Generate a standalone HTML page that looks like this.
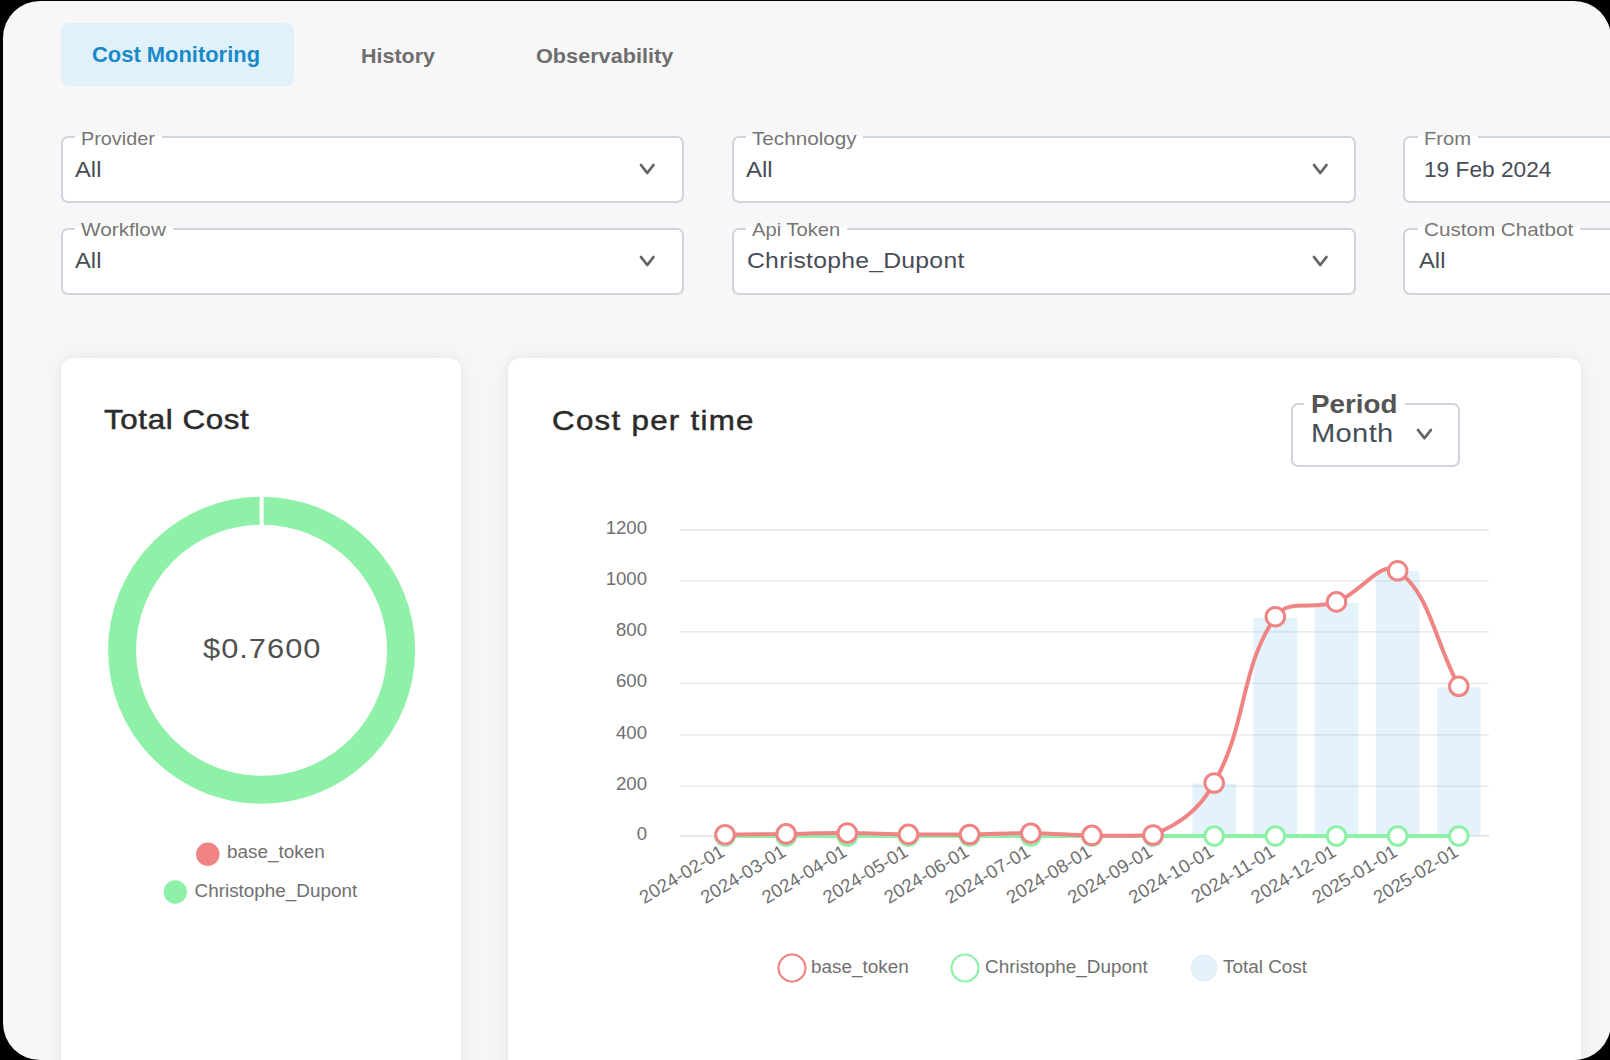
<!DOCTYPE html>
<html><head><meta charset="utf-8"><title>Cost Monitoring</title>
<style>
html,body{margin:0;padding:0;}
body{width:1610px;height:1060px;overflow:hidden;background:#000;position:relative;font-family:"Liberation Sans",sans-serif;}
.page{position:absolute;left:3px;top:1px;width:1608px;height:1059px;border-radius:37px;background:#f7f7f7;overflow:hidden;}
.abs{position:absolute;left:0;top:0;width:1610px;height:1060px;}
.inner{position:absolute;left:-3px;top:-1px;width:1610px;height:1060px;}
.t{position:absolute;line-height:1;white-space:nowrap;transform-origin:0 0;}
.tab{position:absolute;left:61px;top:23.4px;width:232.5px;height:62.6px;border-radius:8px;background:#e1f1fa;}
.fb{position:absolute;height:67.4px;box-sizing:border-box;border:2px solid #ced5dc;border-radius:7px;background:#fff;}
.notch{position:absolute;height:3px;background:#fff;}
.chev{position:absolute;}
.card{position:absolute;background:#fff;border-radius:12px;box-shadow:0 0 6px rgba(0,0,0,0.05),0 0 26px rgba(0,0,0,0.06);}
svg text{font-family:"Liberation Sans",sans-serif;}
.tk{font-size:18.6px;fill:#707070;}
.lg{font-size:18.9px;fill:#707070;}
</style></head>
<body>
<div class="page"><div class="inner">
<div class="tab"></div>
<div class="t" style="left:92.30px;top:43.68px;font-size:22px;font-weight:bold;color:#1889c9;letter-spacing:0.000px;transform:scaleX(0.9964);">Cost Monitoring</div>
<div class="t" style="left:361.30px;top:44.82px;font-size:21px;font-weight:bold;color:#6e6e6e;letter-spacing:0.000px;transform:scaleX(1.0221);">History</div>
<div class="t" style="left:536.00px;top:44.82px;font-size:21px;font-weight:bold;color:#6e6e6e;letter-spacing:0.000px;transform:scaleX(1.0316);">Observability</div>
<div class="fb" style="left:60.8px;top:135.8px;width:623.5px"></div>
<div class="notch" style="left:74.9px;top:135.6px;width:86.7px"></div>
<div class="t" style="left:81.10px;top:128.62px;font-size:19px;font-weight:normal;color:#767676;letter-spacing:0.000px;transform:scaleX(1.0438);">Provider</div>
<div class="t" style="left:74.70px;top:158.65px;font-size:22.5px;font-weight:normal;color:#474d56;letter-spacing:-0.000px;transform:scaleX(1.0560);">All</div>
<svg class="chev" style="left:638.15px;top:162.30px" width="18.50" height="14.00" viewBox="0 0 18.50 14.00"><path d="M3 3 L9.25 11.00 L15.50 3" fill="none" stroke="#646464" stroke-width="2.8" stroke-linecap="round" stroke-linejoin="round"/></svg>
<div class="fb" style="left:732px;top:135.8px;width:623.5px"></div>
<div class="notch" style="left:745.6px;top:135.6px;width:117.4px"></div>
<div class="t" style="left:751.80px;top:128.62px;font-size:19px;font-weight:normal;color:#767676;letter-spacing:0.000px;transform:scaleX(1.0884);">Technology</div>
<div class="t" style="left:746.20px;top:158.65px;font-size:22.5px;font-weight:normal;color:#474d56;letter-spacing:0.000px;transform:scaleX(1.0640);">All</div>
<svg class="chev" style="left:1310.95px;top:162.30px" width="18.50" height="14.00" viewBox="0 0 18.50 14.00"><path d="M3 3 L9.25 11.00 L15.50 3" fill="none" stroke="#646464" stroke-width="2.8" stroke-linecap="round" stroke-linejoin="round"/></svg>
<div class="fb" style="left:1402.8px;top:135.8px;width:300px"></div>
<div class="notch" style="left:1418.2px;top:135.6px;width:59.8px"></div>
<div class="t" style="left:1424.40px;top:128.62px;font-size:19px;font-weight:normal;color:#767676;letter-spacing:0.000px;transform:scaleX(1.0609);">From</div>
<div class="t" style="left:1424.30px;top:158.65px;font-size:22.5px;font-weight:normal;color:#474d56;letter-spacing:0.000px;transform:scaleX(1.0087);">19 Feb 2024</div>
<div class="fb" style="left:60.8px;top:227.6px;width:623.5px"></div>
<div class="notch" style="left:75.2px;top:227.4px;width:97.8px"></div>
<div class="t" style="left:81.40px;top:220.42px;font-size:19px;font-weight:normal;color:#767676;letter-spacing:0.000px;transform:scaleX(1.0911);">Workflow</div>
<div class="t" style="left:74.70px;top:250.45px;font-size:22.5px;font-weight:normal;color:#474d56;letter-spacing:-0.000px;transform:scaleX(1.0560);">All</div>
<svg class="chev" style="left:638.15px;top:254.10px" width="18.50" height="14.00" viewBox="0 0 18.50 14.00"><path d="M3 3 L9.25 11.00 L15.50 3" fill="none" stroke="#646464" stroke-width="2.8" stroke-linecap="round" stroke-linejoin="round"/></svg>
<div class="fb" style="left:732px;top:227.6px;width:623.5px"></div>
<div class="notch" style="left:746.2px;top:227.4px;width:101.0px"></div>
<div class="t" style="left:752.40px;top:220.42px;font-size:19px;font-weight:normal;color:#767676;letter-spacing:-0.000px;transform:scaleX(1.0614);">Api Token</div>
<div class="t" style="left:746.80px;top:250.45px;font-size:22.5px;font-weight:normal;color:#474d56;letter-spacing:0.228px;transform:scaleX(1.1000);">Christophe_Dupont</div>
<svg class="chev" style="left:1310.95px;top:254.10px" width="18.50" height="14.00" viewBox="0 0 18.50 14.00"><path d="M3 3 L9.25 11.00 L15.50 3" fill="none" stroke="#646464" stroke-width="2.8" stroke-linecap="round" stroke-linejoin="round"/></svg>
<div class="fb" style="left:1402.8px;top:227.6px;width:300px"></div>
<div class="notch" style="left:1417.7px;top:227.4px;width:162.0px"></div>
<div class="t" style="left:1423.90px;top:220.42px;font-size:19px;font-weight:normal;color:#767676;letter-spacing:0.000px;transform:scaleX(1.0867);">Custom Chatbot</div>
<div class="t" style="left:1419.30px;top:250.45px;font-size:22.5px;font-weight:normal;color:#474d56;letter-spacing:-0.000px;transform:scaleX(1.0560);">All</div>
<div class="card" style="left:60.5px;top:357.5px;width:400px;height:760px"></div>
<div class="card" style="left:508px;top:357.5px;width:1073.3px;height:760px"></div>
<div class="t" style="left:104.20px;top:405.47px;font-size:28.5px;font-weight:normal;color:#2b2b2b;letter-spacing:0.548px;transform:scaleX(1.1000);-webkit-text-stroke:0.5px #2b2b2b;">Total Cost</div>
<div class="t" style="left:552.20px;top:405.87px;font-size:28.5px;font-weight:normal;color:#2b2b2b;letter-spacing:1.140px;transform:scaleX(1.1000);-webkit-text-stroke:0.5px #2b2b2b;">Cost per time</div>
<div class="t" style="left:202.70px;top:634.50px;font-size:28px;font-weight:normal;color:#505050;letter-spacing:0.921px;transform:scaleX(1.1000);">$0.7600</div>
<div class="fb" style="left:1291.3px;top:402.7px;width:168.9px;height:64px"></div>
<div class="notch" style="left:1304.4px;top:402px;width:101px;"></div>
<div class="t" style="left:1310.50px;top:390.89px;font-size:26px;font-weight:bold;color:#555;letter-spacing:-0.000px;transform:scaleX(1.0692);">Period</div>
<div class="t" style="left:1310.50px;top:420.47px;font-size:26.5px;font-weight:normal;color:#474d56;letter-spacing:0.280px;transform:scaleX(1.1000);">Month</div>
<svg class="chev" style="left:1414.75px;top:426.90px" width="18.90" height="14.20" viewBox="0 0 18.90 14.20"><path d="M3 3 L9.45 11.20 L15.90 3" fill="none" stroke="#646464" stroke-width="2.8" stroke-linecap="round" stroke-linejoin="round"/></svg>
<svg class="abs" width="1610" height="1060" viewBox="0 0 1610 1060">
<line x1="680" y1="786.20" x2="1489" y2="786.20" stroke="#e6e6e6" stroke-width="1.3"/>
<line x1="680" y1="734.80" x2="1489" y2="734.80" stroke="#e6e6e6" stroke-width="1.3"/>
<line x1="680" y1="683.30" x2="1489" y2="683.30" stroke="#e6e6e6" stroke-width="1.3"/>
<line x1="680" y1="631.80" x2="1489" y2="631.80" stroke="#e6e6e6" stroke-width="1.3"/>
<line x1="680" y1="580.80" x2="1489" y2="580.80" stroke="#e6e6e6" stroke-width="1.3"/>
<line x1="680" y1="530.00" x2="1489" y2="530.00" stroke="#e6e6e6" stroke-width="1.3"/>
<rect x="1192.35" y="783.50" width="43.7" height="52.30" fill="rgba(120,195,235,0.2)"/>
<rect x="1253.50" y="617.70" width="43.7" height="218.10" fill="rgba(120,195,235,0.2)"/>
<rect x="1314.65" y="603.00" width="43.7" height="232.80" fill="rgba(120,195,235,0.2)"/>
<rect x="1375.80" y="571.20" width="43.7" height="264.60" fill="rgba(120,195,235,0.2)"/>
<rect x="1436.95" y="687.30" width="43.7" height="148.50" fill="rgba(120,195,235,0.2)"/>
<line x1="680" y1="835.80" x2="1489" y2="835.80" stroke="#d6d9dc" stroke-width="1.3"/>
<text x="647" y="839.70" text-anchor="end" class="tk">0</text>
<text x="647" y="790.10" text-anchor="end" class="tk">200</text>
<text x="647" y="738.70" text-anchor="end" class="tk">400</text>
<text x="647" y="687.20" text-anchor="end" class="tk">600</text>
<text x="647" y="635.70" text-anchor="end" class="tk">800</text>
<text x="647" y="584.70" text-anchor="end" class="tk">1000</text>
<text x="647" y="533.90" text-anchor="end" class="tk">1200</text>
<path d="M725.00 836.0 L1458.80 836.0" stroke="#8ff0a8" stroke-width="4" fill="none"/>
<circle cx="725.00" cy="836.0" r="9.3" fill="#fff" stroke="#8ff0a8" stroke-width="3"/>
<circle cx="786.15" cy="836.0" r="9.3" fill="#fff" stroke="#8ff0a8" stroke-width="3"/>
<circle cx="847.30" cy="836.0" r="9.3" fill="#fff" stroke="#8ff0a8" stroke-width="3"/>
<circle cx="908.45" cy="836.0" r="9.3" fill="#fff" stroke="#8ff0a8" stroke-width="3"/>
<circle cx="969.60" cy="836.0" r="9.3" fill="#fff" stroke="#8ff0a8" stroke-width="3"/>
<circle cx="1030.75" cy="836.0" r="9.3" fill="#fff" stroke="#8ff0a8" stroke-width="3"/>
<circle cx="1091.90" cy="836.0" r="9.3" fill="#fff" stroke="#8ff0a8" stroke-width="3"/>
<circle cx="1153.05" cy="836.0" r="9.3" fill="#fff" stroke="#8ff0a8" stroke-width="3"/>
<circle cx="1214.20" cy="836.0" r="9.3" fill="#fff" stroke="#8ff0a8" stroke-width="3"/>
<circle cx="1275.35" cy="836.0" r="9.3" fill="#fff" stroke="#8ff0a8" stroke-width="3"/>
<circle cx="1336.50" cy="836.0" r="9.3" fill="#fff" stroke="#8ff0a8" stroke-width="3"/>
<circle cx="1397.65" cy="836.0" r="9.3" fill="#fff" stroke="#8ff0a8" stroke-width="3"/>
<circle cx="1458.80" cy="836.0" r="9.3" fill="#fff" stroke="#8ff0a8" stroke-width="3"/>
<path d="M725.00 834.70 C749.46 834.38 761.69 834.22 786.15 833.90 C810.61 833.58 822.84 833.00 847.30 833.10 C871.76 833.20 883.99 834.12 908.45 834.40 C932.91 834.68 945.14 834.74 969.60 834.50 C994.06 834.26 1006.30 833.02 1030.75 833.20 C1055.22 833.38 1067.43 835.04 1091.90 835.40 C1116.35 835.76 1131.90 836.50 1153.05 835.00 C1180.82 823.10 1198.95 810.22 1214.20 783.00 C1247.87 722.90 1239.25 670.16 1275.35 616.70 C1288.17 597.72 1313.10 610.68 1336.50 601.90 C1362.02 592.32 1380.81 559.18 1397.65 570.80 C1429.73 592.94 1434.34 640.10 1458.80 686.30" stroke="#f08484" stroke-width="4" fill="none"/>
<circle cx="725.00" cy="834.70" r="9.3" fill="#fff" stroke="#f08484" stroke-width="3"/>
<circle cx="786.15" cy="833.90" r="9.3" fill="#fff" stroke="#f08484" stroke-width="3"/>
<circle cx="847.30" cy="833.10" r="9.3" fill="#fff" stroke="#f08484" stroke-width="3"/>
<circle cx="908.45" cy="834.40" r="9.3" fill="#fff" stroke="#f08484" stroke-width="3"/>
<circle cx="969.60" cy="834.50" r="9.3" fill="#fff" stroke="#f08484" stroke-width="3"/>
<circle cx="1030.75" cy="833.20" r="9.3" fill="#fff" stroke="#f08484" stroke-width="3"/>
<circle cx="1091.90" cy="835.40" r="9.3" fill="#fff" stroke="#f08484" stroke-width="3"/>
<circle cx="1153.05" cy="835.00" r="9.3" fill="#fff" stroke="#f08484" stroke-width="3"/>
<circle cx="1214.20" cy="783.00" r="9.3" fill="#fff" stroke="#f08484" stroke-width="3"/>
<circle cx="1275.35" cy="616.70" r="9.3" fill="#fff" stroke="#f08484" stroke-width="3"/>
<circle cx="1336.50" cy="601.90" r="9.3" fill="#fff" stroke="#f08484" stroke-width="3"/>
<circle cx="1397.65" cy="570.80" r="9.3" fill="#fff" stroke="#f08484" stroke-width="3"/>
<circle cx="1458.80" cy="686.30" r="9.3" fill="#fff" stroke="#f08484" stroke-width="3"/>
<text transform="translate(719.20 844) rotate(-31)" x="0" y="13" text-anchor="end" class="tk">2024-02-01</text>
<text transform="translate(780.35 844) rotate(-31)" x="0" y="13" text-anchor="end" class="tk">2024-03-01</text>
<text transform="translate(841.50 844) rotate(-31)" x="0" y="13" text-anchor="end" class="tk">2024-04-01</text>
<text transform="translate(902.65 844) rotate(-31)" x="0" y="13" text-anchor="end" class="tk">2024-05-01</text>
<text transform="translate(963.80 844) rotate(-31)" x="0" y="13" text-anchor="end" class="tk">2024-06-01</text>
<text transform="translate(1024.95 844) rotate(-31)" x="0" y="13" text-anchor="end" class="tk">2024-07-01</text>
<text transform="translate(1086.10 844) rotate(-31)" x="0" y="13" text-anchor="end" class="tk">2024-08-01</text>
<text transform="translate(1147.25 844) rotate(-31)" x="0" y="13" text-anchor="end" class="tk">2024-09-01</text>
<text transform="translate(1208.40 844) rotate(-31)" x="0" y="13" text-anchor="end" class="tk">2024-10-01</text>
<text transform="translate(1269.55 844) rotate(-31)" x="0" y="13" text-anchor="end" class="tk">2024-11-01</text>
<text transform="translate(1330.70 844) rotate(-31)" x="0" y="13" text-anchor="end" class="tk">2024-12-01</text>
<text transform="translate(1391.85 844) rotate(-31)" x="0" y="13" text-anchor="end" class="tk">2025-01-01</text>
<text transform="translate(1453.00 844) rotate(-31)" x="0" y="13" text-anchor="end" class="tk">2025-02-01</text>
<circle cx="792" cy="968" r="13.5" fill="none" stroke="#f08484" stroke-width="2.2"/>
<text x="811" y="973" class="lg">base_token</text>
<circle cx="965" cy="968" r="13.5" fill="none" stroke="#8ff0a8" stroke-width="2.2"/>
<text x="985" y="973" class="lg">Christophe_Dupont</text>
<circle cx="1204" cy="968" r="13.5" fill="#e3f1f9"/>
<text x="1223" y="973" class="lg">Total Cost</text>
<circle cx="261.6" cy="650.2" r="139.5" fill="none" stroke="#8ff0a8" stroke-width="28.0"/>
<rect x="259.6" y="495.70000000000005" width="4" height="30.0" fill="#fff"/>
<circle cx="207.8" cy="854.2" r="11.7" fill="#f08484"/>
<text x="227" y="858" class="lg">base_token</text>
<circle cx="175.3" cy="892" r="11.7" fill="#8ff0a8"/>
<text x="194.5" y="896.5" class="lg">Christophe_Dupont</text>
</svg>
</div></div>
</body></html>
